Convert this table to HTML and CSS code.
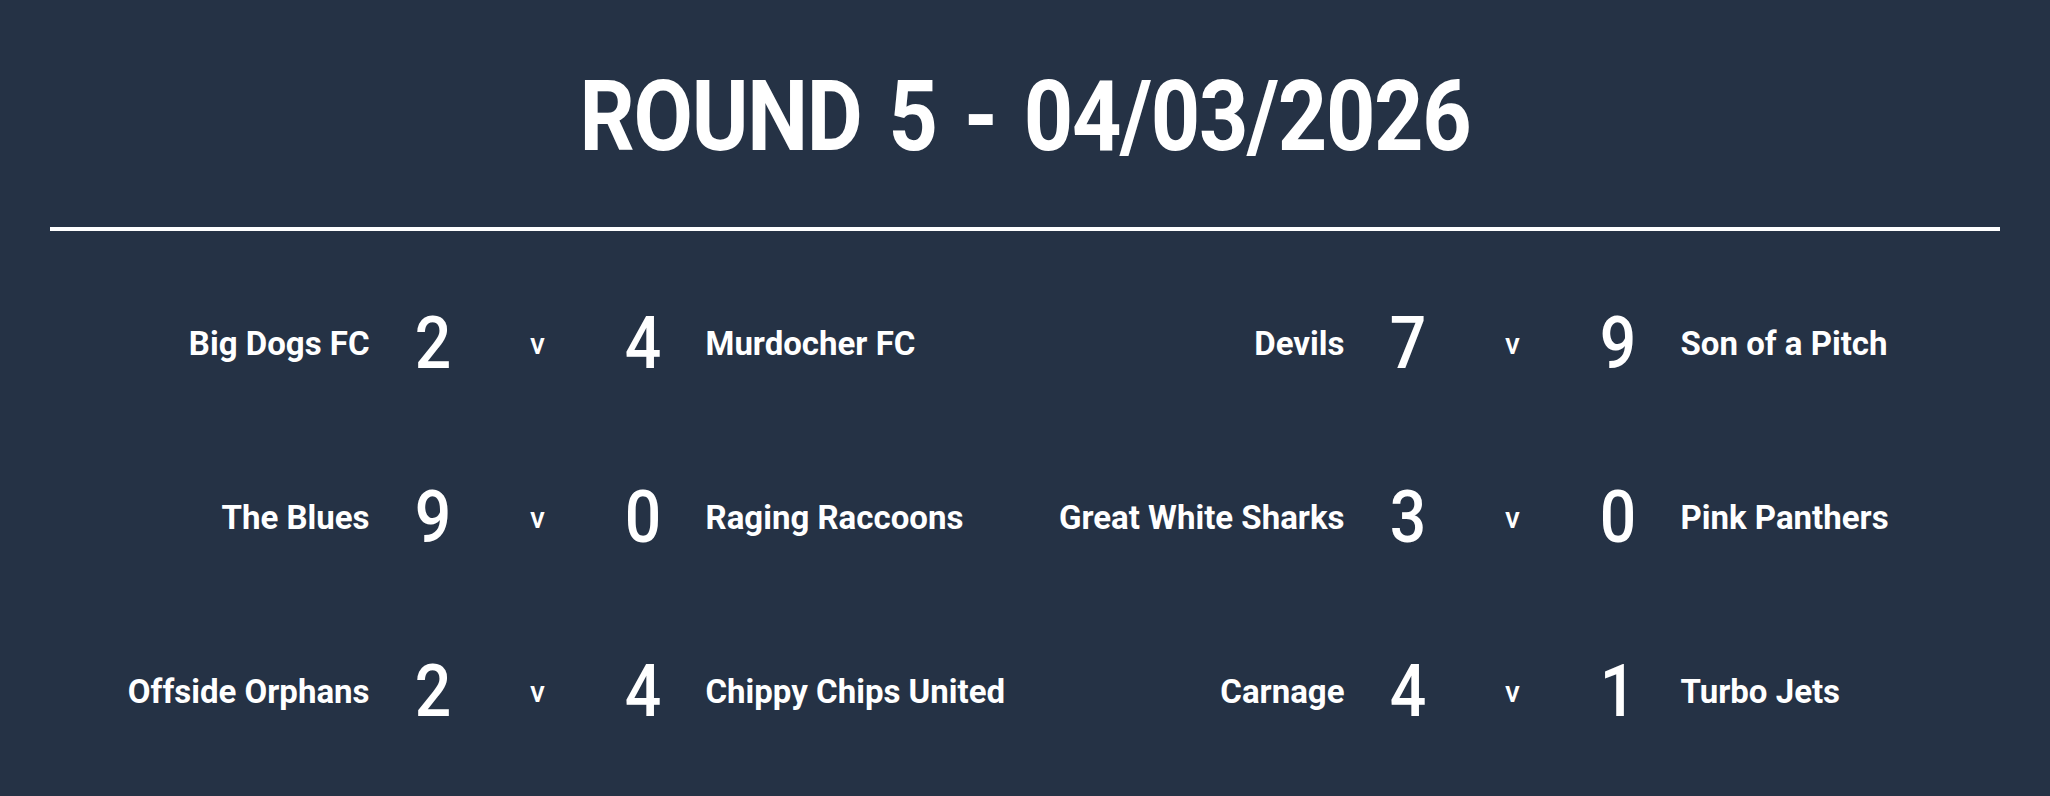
FILE: index.html
```html
<!DOCTYPE html>
<html lang="en">
<head>
<meta charset="utf-8">
<title>Round 5 Results</title>
<link rel="stylesheet" href="styles.css">
</head>
<body>
<main class="page">
  <h1 class="title">ROUND 5 - 04/03/2026</h1>
  <div class="rule"></div>
  <section class="matches">
    <div class="match">
      <span class="team home">Big Dogs FC</span>
      <span class="score">2</span>
      <span class="vs">v</span>
      <span class="score">4</span>
      <span class="team away">Murdocher FC</span>
    </div>
    <div class="match">
      <span class="team home">Devils</span>
      <span class="score">7</span>
      <span class="vs">v</span>
      <span class="score">9</span>
      <span class="team away">Son of a Pitch</span>
    </div>
    <div class="match">
      <span class="team home">The Blues</span>
      <span class="score">9</span>
      <span class="vs">v</span>
      <span class="score">0</span>
      <span class="team away">Raging Raccoons</span>
    </div>
    <div class="match">
      <span class="team home">Great White Sharks</span>
      <span class="score">3</span>
      <span class="vs">v</span>
      <span class="score">0</span>
      <span class="team away">Pink Panthers</span>
    </div>
    <div class="match">
      <span class="team home">Offside Orphans</span>
      <span class="score">2</span>
      <span class="vs">v</span>
      <span class="score">4</span>
      <span class="team away">Chippy Chips United</span>
    </div>
    <div class="match">
      <span class="team home">Carnage</span>
      <span class="score">4</span>
      <span class="vs">v</span>
      <span class="score">1</span>
      <span class="team away">Turbo Jets</span>
    </div>
  </section>
</main>
</body>
</html>
```
FILE: styles.css
```css
html, body {
  margin: 0;
  padding: 0;
  background: #253245;
}

body {
  color: #ffffff;
  font-family: Roboto, "Liberation Sans", sans-serif;
}

.page {
  padding: 0 50px;
}

.title {
  margin: 68px 0 0;
  font-family: Roboto, "Liberation Sans", sans-serif;
  font-weight: 700;
  font-size: 98px;
  line-height: 1;
  letter-spacing: -1.5px;
  word-spacing: 8px;
  text-align: center;
  transform: scaleX(0.88);
}

.rule {
  height: 4px;
  margin-top: 61px;
  background: #ffffff;
}

.matches {
  display: grid;
  grid-template-columns: 1fr 1fr;
  row-gap: 101px;
  margin-top: 76px;
}

.match {
  display: grid;
  grid-template-columns: 1fr 126px 84px 126px 1fr;
  align-items: center;
}

.team {
  font-size: 33px;
  font-weight: 700;
  line-height: 1;
  white-space: nowrap;
}

.home {
  text-align: right;
}

.away {
  text-align: left;
}

.score {
  font-size: 73px;
  font-weight: 500;
  line-height: 1;
  text-align: center;
  transform: scaleX(0.88);
}

.vs {
  font-size: 30px;
  font-weight: 500;
  line-height: 1;
  text-align: center;
}
```
